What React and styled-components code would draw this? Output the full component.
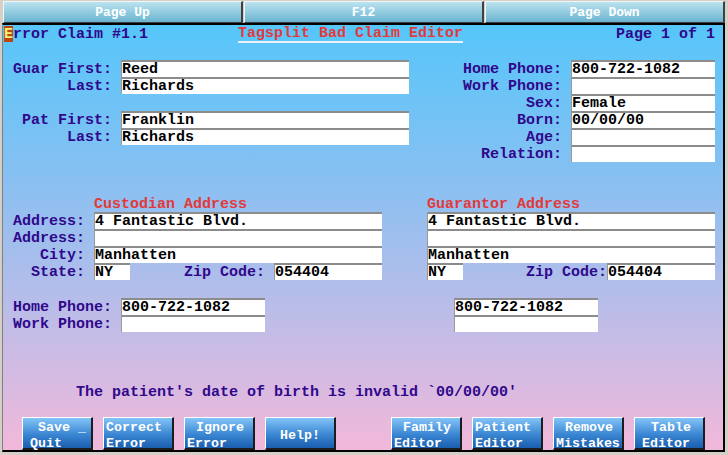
import React from "react";
import styled, { createGlobalStyle } from "styled-components";

const GlobalStyle = createGlobalStyle`
  html, body {
    margin: 0;
    padding: 0;
    background: #d4d0c8;
  }
  body {
    font-family: "Liberation Mono", "Courier New", monospace;
  }
`;

const Screen = styled.div`
  width: 728px;
  height: 455px;
  background: #d4d0c8;
  overflow: hidden;
  display: flex;
  flex-direction: column;
`;

const TopBar = styled.div`
  display: grid;
  grid-template-columns: repeat(3, 1fr);
  gap: 1px;
  padding: 1px 3px 0 3px;
  height: 23px;
  box-sizing: border-box;
`;

const TopButton = styled.div`
  box-sizing: border-box;
  height: 22px;
  padding-top: 2px;
  border-top: 1px solid #f4f4f4;
  border-left: 1px solid #f4f4f4;
  border-right: 2px solid #404040;
  border-bottom: 1px solid #404040;
  background: linear-gradient(180deg, #bbe3ef 0%, #6ab4d0 100%);
  color: #fff;
  font-weight: bold;
  font-size: 13px;
  line-height: 18px;
  text-align: center;
`;

const Panel = styled.div`
  flex: 1;
  margin: 0 3px 3px 2px;
  border-top: 2px solid #000;
  border-left: 1px solid #808080;
  border-right: 2px solid #000;
  border-bottom: 2px solid #000;
  background: linear-gradient(
    180deg,
    #56c6fa 0%,
    #86c0f2 35%,
    #c6bce6 74%,
    #f2b8da 100%
  );
  display: flex;
  flex-direction: column;
  font-size: 15px;
  font-weight: bold;
  color: #30088c;
`;

const Header = styled.div`
  display: flex;
  align-items: center;
  height: 18px;
  line-height: 17px;
  padding: 0 8px 0 1px;
`;

const HotKey = styled.span`
  display: inline-block;
  height: 16px;
  line-height: 17px;
  background: #b8480c;
  color: #f6f07a;
`;

const Title = styled.span`
  display: inline-block;
  margin-left: 90px;
  margin-top: 2px;
  line-height: 14px;
  color: #e23a3a;
  border-bottom: 2px solid #eef2f6;
`;

const PageOf = styled.span`
  margin-left: auto;
`;

const Upper = styled.div`
  display: flex;
  justify-content: space-between;
  margin-top: 17px;
  padding-right: 8px;
`;

const Column = styled.div`
  display: flex;
  flex-direction: column;
`;

const Row = styled.div`
  display: flex;
  height: 17px;
  line-height: 15px;
`;

const Label = styled.div`
  box-sizing: border-box;
  width: ${(p) => p.$w}px;
  padding-top: 2px;
  padding-right: ${(p) => (p.$pad === undefined ? 9 : p.$pad)}px;
  text-align: right;
  white-space: pre;
`;

const Field = styled.div`
  box-sizing: border-box;
  width: ${(p) => p.$w}px;
  background: #fff;
  border-top: 2px solid #8c8c8c;
  border-left: 1px solid #9a9a9a;
  color: #000;
  white-space: pre;
  overflow: hidden;
`;

const Spacer = styled.div`
  height: ${(p) => p.$h || 0}px;
  width: ${(p) => p.$w || 0}px;
  flex-shrink: 0;
`;

const AddressArea = styled.div`
  display: flex;
  gap: 45px;
  margin-top: 36px;
`;

const Heading = styled.div`
  height: 14px;
  line-height: 14px;
  padding-left: ${(p) => p.$indent}px;
  color: #e23a3a;
`;

const Message = styled.div`
  margin-top: 53px;
  padding-left: 73px;
  line-height: 16px;
  height: 16px;
`;

const ButtonBar = styled.div`
  display: flex;
  justify-content: space-between;
  margin-top: 16px;
  padding: 0 18px 0 19px;
`;

const ButtonGroup = styled.div`
  display: flex;
  gap: 10px;
`;

const Button = styled.div`
  box-sizing: border-box;
  width: 71px;
  height: 33px;
  padding: ${(p) => (p.$single ? 5 : 2)}px 0 0 2px;
  border-top: 1px solid #fff;
  border-left: 1px solid #fff;
  border-right: 2px solid #1c1c1c;
  border-bottom: 2px solid #1c1c1c;
  background: linear-gradient(180deg, #84c4f8 0%, #3a86d2 55%, #1a5eae 100%);
  color: #fff;
  font-size: 13.3px;
  line-height: 16px;
  display: flex;
  flex-direction: column;
  justify-content: ${(p) => (p.$single ? "center" : "flex-start")};
  white-space: pre;
`;

const Line = styled.span`
  display: block;
  padding-left: ${(p) => p.$indent}px;
`;

const guarantor = [
  ["Guar First:", "Reed"],
  ["Last:", "Richards"],
];

const patient = [
  ["Pat First:", "Franklin"],
  ["Last:", "Richards"],
];

const contact = [
  ["Home Phone:", "800-722-1082"],
  ["Work Phone:", ""],
  ["Sex:", "Female"],
  ["Born:", "00/00/00"],
  ["Age:", ""],
  ["Relation:", ""],
];

const leftButtons = [
  [["Save _", 13], ["Quit", 5]],
  [["Correct", 0], ["Error", 0]],
  [["Ignore", 9], ["Error", 0]],
  [["Help!", 12]],
];

const rightButtons = [
  [["Family", 9], ["Editor", 0]],
  [["Patient", 0], ["Editor", 0]],
  [["Remove", 9], ["Mistakes", 0]],
  [["Table", 14], ["Editor", 5]],
];

const NameRows = ({ rows }) =>
  rows.map(([label, value], i) => (
    <Row key={i}>
      <Label $w={118}>{label}</Label>
      <Field $w={288}>{value}</Field>
    </Row>
  ));

const AddressBlock = ({ title, labels }) => (
  <Column>
    <Heading $indent={labels ? 91 : 0}>{title}</Heading>
    <Row>
      {labels && <Label $w={91}>Address:</Label>}
      <Field $w={288}>4 Fantastic Blvd.</Field>
    </Row>
    <Row>
      {labels && <Label $w={91}>Address:</Label>}
      <Field $w={288} />
    </Row>
    <Row>
      {labels && <Label $w={91}>City:</Label>}
      <Field $w={288}>Manhatten</Field>
    </Row>
    <Row>
      {labels && <Label $w={91}>State:</Label>}
      <Field $w={36}>NY</Field>
      <Label $w={144} $pad={labels ? 9 : 0}>
        Zip Code:
      </Label>
      <Field $w={108}>054404</Field>
    </Row>
    <Spacer $h={18} />
    <Row>
      {labels ? <Label $w={118}>Home Phone:</Label> : <Spacer $w={27} />}
      <Field $w={144}>800-722-1082</Field>
    </Row>
    <Row>
      {labels ? <Label $w={118}>Work Phone:</Label> : <Spacer $w={27} />}
      <Field $w={144} />
    </Row>
  </Column>
);

const Buttons = ({ items }) => (
  <ButtonGroup>
    {items.map((lines, i) => (
      <Button key={i} $single={lines.length === 1}>
        {lines.map(([text, indent], j) => (
          <Line key={j} $indent={indent}>
            {text}
          </Line>
        ))}
      </Button>
    ))}
  </ButtonGroup>
);

export default function App() {
  return (
    <Screen>
      <GlobalStyle />
      <TopBar>
        <TopButton>Page Up</TopButton>
        <TopButton>F12</TopButton>
        <TopButton>Page Down</TopButton>
      </TopBar>
      <Panel>
        <Header>
          <span>
            <HotKey>E</HotKey>rror Claim #1.1
          </span>
          <Title>Tagsplit Bad Claim Editor</Title>
          <PageOf>Page 1 of 1</PageOf>
        </Header>

        <Upper>
          <Column>
            <NameRows rows={guarantor} />
            <Spacer $h={17} />
            <NameRows rows={patient} />
          </Column>
          <Column>
            {contact.map(([label, value], i) => (
              <Row key={i}>
                <Label $w={120}>{label}</Label>
                <Field $w={144}>{value}</Field>
              </Row>
            ))}
          </Column>
        </Upper>

        <AddressArea>
          <AddressBlock title="Custodian Address" labels />
          <AddressBlock title="Guarantor Address" />
        </AddressArea>

        <Message>The patient's date of birth is invalid `00/00/00'</Message>

        <ButtonBar>
          <Buttons items={leftButtons} />
          <Buttons items={rightButtons} />
        </ButtonBar>
      </Panel>
    </Screen>
  );
}
